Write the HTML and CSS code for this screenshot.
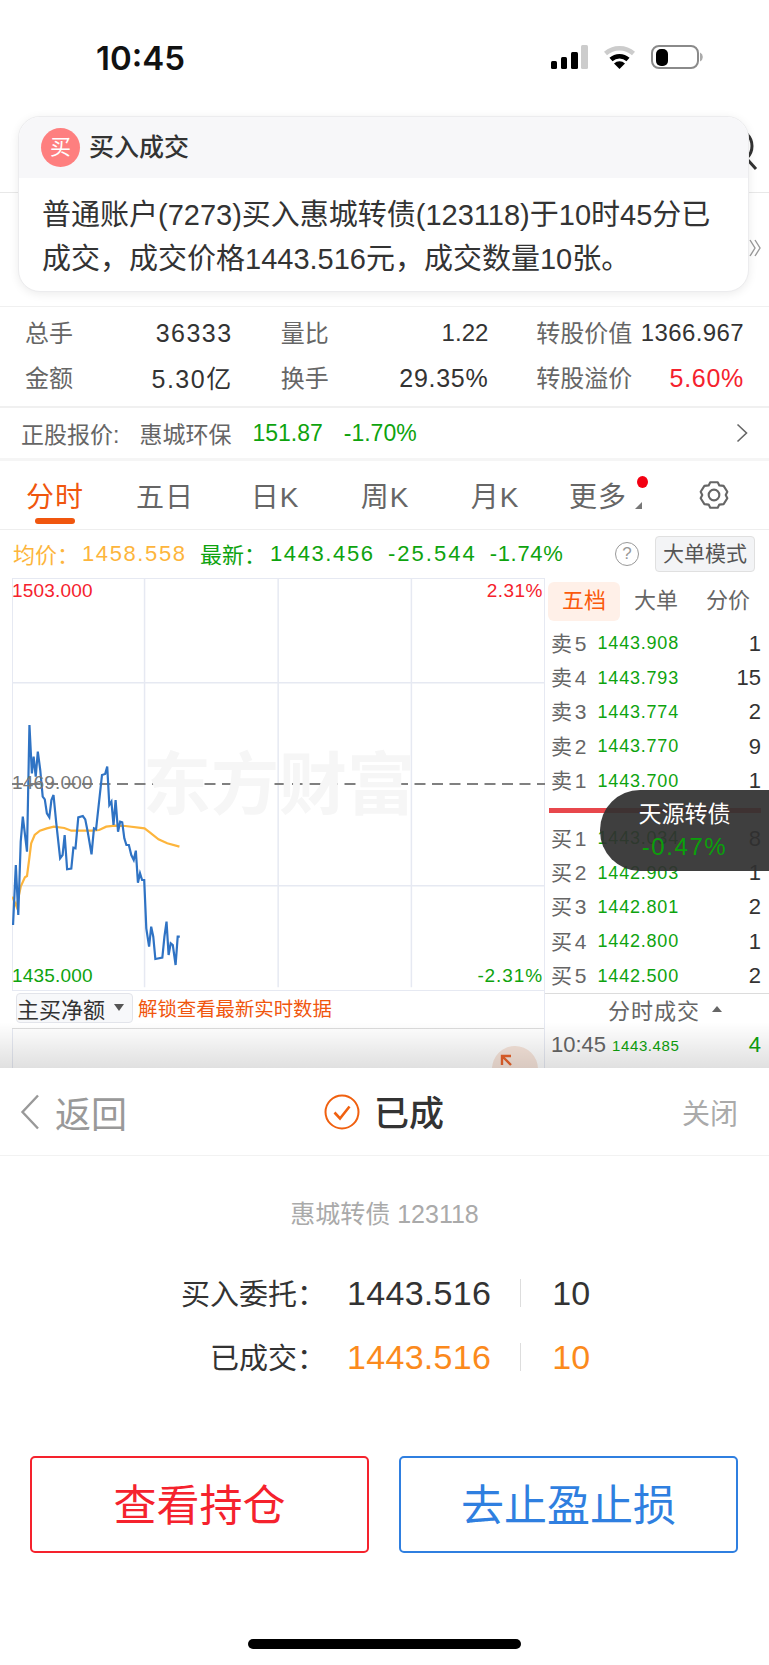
FILE: index.html
```html
<!DOCTYPE html>
<html>
 <head>
  <meta charset="utf-8">
  <title>惠城转债</title>
  <meta name="viewport" content="width=device-width, initial-scale=1.0">
  <link rel="stylesheet" href="styles.css">
 </head>
<body>

<header class="status">
  <span class="time">10:45</span>
  <div class="status-icons">
    <svg width="37" height="24" viewBox="0 0 37 24">
      <rect x="0" y="16" width="6" height="8" rx="1.5" fill="#000"/>
      <rect x="10" y="12" width="6" height="12" rx="1.5" fill="#000"/>
      <rect x="20" y="7" width="7" height="17" rx="1.5" fill="#000"/>
      <rect x="30" y="0" width="7" height="24" rx="1.5" fill="#ccc"/>
    </svg>
    <svg class="wifi" width="33" height="24" viewBox="0 0 33 24">
      <path d="M2.5 8.5a21 21 0 0 1 28 0" fill="none" stroke="#ccc" stroke-width="4.5"/>
      <path d="M8 14.5a12.5 12.5 0 0 1 17 0" fill="none" stroke="#000" stroke-width="4.5"/>
      <path d="M16.5 24l-5.5-5.5a8 8 0 0 1 11 0z" fill="#000"/>
    </svg>
    <svg class="battery" width="52" height="24" viewBox="0 0 52 24">
      <rect x="1" y="1" width="46" height="22" rx="7" fill="none" stroke="#8a8a8a" stroke-width="2"/>
      <rect x="5" y="4" width="12" height="17" rx="5" fill="#000"/>
      <path d="M49 7.5a5 5 0 0 1 0 9z" fill="#aaa"/>
    </svg>
  </div>
</header>

<div class="nav">
  <svg class="nav-search" width="44" height="46" viewBox="0 0 44 46">
    <circle cx="20" cy="20" r="17" fill="none" stroke="#333" stroke-width="3"/>
    <path d="M32 33l9 10" stroke="#333" stroke-width="3"/>
  </svg>
</div>

<div class="quote">
  <svg width="12" height="18" viewBox="0 0 12 18">
    <path d="M1 1l5 8-5 8M6 1l5 8-5 8" fill="none" stroke="#999" stroke-width="1.4"/>
  </svg>
</div>

<!-- notification lying over the page -->
<div class="notice">
  <div class="notice-head">
    <span class="notice-badge">买</span>
    <span class="notice-title">买入成交</span>
  </div>
  <p class="notice-body">普通账户(7273)买入惠城转债(123118)于10时45分已<br>成交，成交价格1443.516元，成交数量10张。</p>
</div>

<section class="stats">
  <div class="stat"><span class="stat-label">总手</span><span class="stat-num sp-wide">36333</span></div>
  <div class="stat"><span class="stat-label">量比</span><span class="stat-num">1.22</span></div>
  <div class="stat"><span class="stat-label">转股价值</span><span class="stat-num sp-thin">1366.967</span></div>
  <div class="stat"><span class="stat-label">金额</span><span class="sp-wide">5.30亿</span></div>
  <div class="stat"><span class="stat-label">换手</span><span class="stat-num sp-mid">29.35%</span></div>
  <div class="stat"><span class="stat-label">转股溢价</span><span class="stat-num red sp-mid">5.60%</span></div>
</section>

<section class="stock">
  <span class="stock-label">正股报价:</span>
  <span class="stock-name">惠城环保</span>
  <span class="green stock-price">151.87</span>
  <span class="green stock-pct">-1.70%</span>
  <svg class="stock-arrow" width="12" height="20" viewBox="0 0 12 20">
    <path d="M1.5 1.5l9 8.5-9 8.5" fill="none" stroke="#666" stroke-width="1.6"/>
  </svg>
</section>

<nav class="tabs">
  <a class="tab tab-on">分时</a>
  <a class="tab">五日</a>
  <a class="tab">日K</a>
  <a class="tab">周K</a>
  <a class="tab">月K</a>
  <a class="tab tab-more">更多<i class="more-dot"></i><i class="more-corner"></i></a>
  <a class="tab">
    <svg class="gear" width="32" height="32" viewBox="0 0 30 30">
      <path d="M11.5 3L18.5 3 20 6 24 6.5 27.5 12 26 15 27.5 18 24 23.5 20 24 18.5 27 11.5 27 10 24 6 23.5 2.5 18 4 15 2.5 12 6 6.5 10 6Z" fill="none" stroke="#666" stroke-width="2" stroke-linejoin="round"/>
      <circle cx="15" cy="15" r="5" fill="none" stroke="#666" stroke-width="2"/>
    </svg>
  </a>
</nav>

<section class="info">
  <span class="amber info-label">均价：</span>
  <span class="amber info-num">1458.558</span>
  <span class="green info-label info-new">最新：</span>
  <span class="green info-num">1443.456</span>
  <span class="green info-change">-25.544</span>
  <span class="green info-pct">-1.74%</span>
  <span class="info-help">?</span>
  <span class="info-btn">大单模式</span>
</section>

<section class="market">
  <div class="chart-col">
    <div class="chart">
      <svg class="chart-lines" viewBox="35 24 1528 1236" preserveAspectRatio="none">
        <g stroke="#e6e9f2" stroke-width="1.5" fill="none">
          <path d="M415 24V1252M798 24V1252M1180 24V1252" vector-effect="non-scaling-stroke"/>
          <path d="M35 338H1563M35 947H1563" vector-effect="non-scaling-stroke"/>
        </g>
        <path d="M35 642H1563" stroke="#808080" stroke-width="1.8" stroke-dasharray="11 6.5" vector-effect="non-scaling-stroke"/>
        <path d="M36 980L48 1010 60 950 72 922 78 918 84 870 90 820 100 795 115 782 135 775 155 770 185 774 205 782 240 782 265 782 285 780 305 770 330 767 360 768 415 775 430 787 455 808 480 820 515 830" fill="none" stroke="#fdb53c" stroke-width="2.2" vector-effect="non-scaling-stroke"/>
        <path d="M38 1065L46 885 53 1035 60 815 66 740 78 845 85 465 92 610 97 560 103 620 109 545 116 600 123 680 129 688 135 730 142 742 148 690 154 675 162 760 173 865 180 855 186 795 193 898 205 896 211 833 217 835 225 742 238 738 245 748 252 785 263 853 270 775 276 778 293 615 302 612 308 590 314 705 320 695 326 765 332 690 339 785 345 755 351 757 357 805 363 825 370 825 377 855 384 870 390 842 396 938 402 910 408 930 414 930 420 1075 428 1130 434 1070 440 1100 446 1167 466 1163 472 1100 478 1055 484 1155 490 1120 496 1125 504 1185 510 1100 516 1100" fill="none" stroke="#2f73c4" stroke-width="2.2" vector-effect="non-scaling-stroke"/>
      </svg>
      <span class="mark">东方财富</span>
      <span class="axis axis-top-l red">1503.000</span>
      <span class="axis axis-mid-l">1469.000</span>
      <span class="axis axis-low-l green">1435.000</span>
      <span class="axis axis-top-r red">2.31%</span>
      <span class="axis axis-low-r green">-2.31%</span>
    </div>
    <div class="sub-row">
      <span class="sub-select">主买净额<i class="caret"></i></span>
      <span class="sub-link">解锁查看最新实时数据</span>
    </div>
    <div class="sub-chart"></div>
  </div>

  <div class="book">
    <div class="book-tabs">
      <span class="book-tab book-tab-on">五档</span>
      <span class="book-tab">大单</span>
      <span class="book-tab">分价</span>
    </div>
    <div class="book-row"><span class="book-side">卖 5</span><span class="book-price">1443.908</span><span class="book-vol">1</span></div>
    <div class="book-row"><span class="book-side">卖 4</span><span class="book-price">1443.793</span><span class="book-vol">15</span></div>
    <div class="book-row"><span class="book-side">卖 3</span><span class="book-price">1443.774</span><span class="book-vol">2</span></div>
    <div class="book-row"><span class="book-side">卖 2</span><span class="book-price">1443.770</span><span class="book-vol">9</span></div>
    <div class="book-row"><span class="book-side">卖 1</span><span class="book-price">1443.700</span><span class="book-vol">1</span></div>
    <div class="book-split"></div>
    <div class="book-row"><span class="book-side">买 1</span><span class="book-price">1443.034</span><span class="book-vol">8</span></div>
    <div class="book-row"><span class="book-side">买 2</span><span class="book-price">1442.903</span><span class="book-vol">1</span></div>
    <div class="book-row"><span class="book-side">买 3</span><span class="book-price">1442.801</span><span class="book-vol">2</span></div>
    <div class="book-row"><span class="book-side">买 4</span><span class="book-price">1442.800</span><span class="book-vol">1</span></div>
    <div class="book-row"><span class="book-side">买 5</span><span class="book-price">1442.500</span><span class="book-vol">2</span></div>
    <div class="deal-head">分时成交<i class="deal-caret"></i></div>
    <div class="deal-row"><span class="deal-time">10:45</span><span class="deal-price">1443.485</span><span class="deal-vol">4</span></div>
  </div>

  <div class="toast">
    <span class="toast-name">天源转债</span>
    <span class="toast-pct">-0.47%</span>
  </div>

  <div class="expand">
    <svg width="30" height="30" viewBox="0 0 30 30">
      <path d="M2 11V2H11M2 2L11 11" fill="none" stroke="#e8622a" stroke-width="2.4"/>
      <path d="M28 19V28H19M28 28L19 19" fill="none" stroke="#e8622a" stroke-width="2.4"/>
    </svg>
  </div>
  <div class="market-shade"></div>
</section>

<section class="sheet">
  <div class="sheet-head">
    <div class="sheet-back">
      <svg width="20" height="36" viewBox="0 0 20 36">
        <path d="M18 1.5L2.5 18 18 34.5" fill="none" stroke="#999" stroke-width="2.4"/>
      </svg>
      <span>返回</span>
    </div>
    <div class="sheet-title">
      <svg width="36" height="36" viewBox="0 0 36 36">
        <circle cx="18" cy="18" r="16.5" fill="none" stroke="#f0600f" stroke-width="2"/>
        <path d="M10.5 18.5l5.5 6 9.5-12" fill="none" stroke="#f0600f" stroke-width="2.6"/>
      </svg>
      <span>已成</span>
    </div>
    <div class="sheet-close">关闭</div>
  </div>

  <div class="sheet-name">惠城转债 123118</div>

  <div class="fill-row">
    <span class="fill-label">买入委托：</span>
    <span class="fill-price">1443.516</span>
    <i class="fill-bar"></i>
    <span class="fill-qty">10</span>
  </div>
  <div class="fill-row fill-done">
    <span class="fill-label">已成交：</span>
    <span class="fill-price">1443.516</span>
    <i class="fill-bar"></i>
    <span class="fill-qty">10</span>
  </div>

  <div class="actions">
    <a class="action action-red">查看持仓</a>
    <a class="action action-blue">去止盈止损</a>
  </div>

  <div class="home-bar"></div>
</section>

</body>
</html>
```

FILE: styles.css
```css
* {
  box-sizing: border-box;
}

html, body {
  margin: 0;
  padding: 0;
}

body {
  position: relative;
  width: 769px;
  height: 1665px;
  overflow: hidden;
  background: #fff;
  color: #333;
  font-family: "Liberation Sans", "Noto Sans CJK SC", sans-serif;
}

i {
  font-style: normal;
}

.red { color: #f5222d; }
.green { color: #0ea30e; }
.amber { color: #fdb53c; }

/* status bar */
.status {
  display: flex;
  justify-content: space-between;
  height: 100px;
  padding: 41px 66px 0 96px;
}

.time {
  font-family: Inter, sans-serif;
  font-size: 33px;
  font-weight: 600;
  line-height: 34px;
  color: #111;
}

.status-icons {
  display: flex;
  align-items: flex-start;
  padding-top: 4px;
}

.wifi { margin-left: 15px; }
.battery { margin-left: 15px; }

/* page parts hidden below the notice */
.nav {
  display: flex;
  justify-content: flex-end;
  height: 93px;
  padding: 26px 10px 0 0;
  border-bottom: 1px solid #e8e8e8;
}

.quote {
  display: flex;
  justify-content: flex-end;
  align-items: flex-end;
  height: 114px;
  padding: 0 8px 49px 0;
  border-bottom: 1px solid #f0f0f0;
}

.notice {
  position: absolute;
  top: 116px;
  left: 18px;
  width: 731px;
  height: 176px;
  background: #fff;
  border: 1px solid #ececee;
  border-radius: 22px;
  box-shadow: 0 2px 10px rgba(0, 0, 0, .08);
  overflow: hidden;
}

.notice-head {
  display: flex;
  align-items: center;
  height: 61px;
  padding-left: 22px;
  background: #f7f7f9;
}

.notice-badge {
  width: 39px;
  height: 39px;
  border-radius: 50%;
  background: #fe7f7f;
  color: #fff;
  font-size: 21px;
  line-height: 37px;
  text-align: center;
}

.notice-title {
  margin-left: 9px;
  padding-bottom: 5px;
  font-size: 25px;
  font-weight: 500;
  color: #333;
}

.notice-body {
  margin: 15px 0 0 23px;
  font-size: 29px;
  line-height: 44px;
  color: #333;
  white-space: nowrap;
}

/* stats */
.stats {
  display: grid;
  grid-template-columns: repeat(3, 1fr);
  grid-auto-rows: 45px;
  column-gap: 48px;
  height: 101px;
  padding: 2px 25px 0;
  border-bottom: 2px solid #f0f0f0;
  font-size: 24px;
}

.stat {
  display: flex;
  justify-content: space-between;
  align-items: center;
}

.stat-label {
  color: #666;
}

.stat-num { padding-top: 3px; }
.sp-wide { font-size: 25px; letter-spacing: 1.5px; }
.sp-mid { font-size: 25px; letter-spacing: .7px; }
.sp-thin { letter-spacing: .4px; }

/* underlying stock */
.stock {
  display: flex;
  align-items: center;
  height: 53px;
  padding: 0 21px;
  border-bottom: 3px solid #f5f5f5;
  font-size: 23px;
}

.stock-label { color: #666; }
.stock-name { margin-left: 20px; color: #666; }
.stock-price { margin-left: 21px; }
.stock-pct { margin-left: 21px; }
.stock-arrow { margin-left: auto; }

/* period tabs */
.tabs {
  display: grid;
  grid-template-columns: repeat(7, 110px);
  height: 69px;
  border-bottom: 1px solid #eeeeee;
}

.tab {
  position: relative;
  display: flex;
  justify-content: center;
  align-items: center;
  font-size: 28px;
  letter-spacing: 1px;
  color: #666;
}

.tab-on {
  color: #f0560e;
}

.tab-on::after {
  content: "";
  position: absolute;
  left: 35px;
  bottom: 5px;
  width: 40px;
  height: 6px;
  border-radius: 3px;
  background: #f0560e;
}

.tab-more {
  padding-right: 14px;
}

.more-dot {
  position: absolute;
  top: 15px;
  left: 87px;
  width: 11px;
  height: 12px;
  border-radius: 50%;
  background: #f30012;
}

.more-corner {
  position: absolute;
  top: 41px;
  left: 85px;
  width: 0;
  height: 0;
  border-left: 7px solid transparent;
  border-bottom: 7px solid #777;
}

.gear {
  margin-left: -3px;
}

/* price line above the chart */
.info {
  display: flex;
  align-items: center;
  height: 48px;
  padding: 0 14px 0 13px;
  font-size: 22px;
}

.info-label { width: 69px; padding-bottom: 3px; white-space: nowrap; }
.info-num { width: 103px; letter-spacing: 1.6px; white-space: nowrap; }
.info-new { margin-left: 15px; width: 70px; }
.info-change { margin-left: 15px; letter-spacing: 2px; }
.info-pct { margin-left: 13px; letter-spacing: .7px; }

.info-help {
  width: 24px;
  height: 24px;
  margin-left: auto;
  border: 1.5px solid #999;
  border-radius: 50%;
  color: #999;
  font-size: 17px;
  line-height: 21px;
  text-align: center;
}

.info-btn {
  width: 100px;
  height: 36px;
  margin-left: 16px;
  border: 1px solid #e0e0e0;
  border-radius: 4px;
  background: #f3f4f6;
  color: #555;
  font-size: 21px;
  line-height: 33px;
  text-align: center;
}

/* chart + order book */
.market {
  position: relative;
  display: flex;
  height: 490px;
  overflow: hidden;
}

.chart-col {
  flex: none;
  width: 544px;
  padding-left: 12px;
}

.chart {
  position: relative;
  width: 533px;
  height: 413px;
  border: 1px solid #e6e9f2;
  border-right: 0;
}

.chart-lines {
  position: absolute;
  top: -1px;
  left: -1px;
  width: 533px;
  height: 412px;
}

.mark {
  position: absolute;
  top: 170px;
  left: 130px;
  font-size: 68px;
  font-weight: 700;
  line-height: 72px;
  color: #f6f6f6;
  white-space: nowrap;
}

.axis {
  position: absolute;
  font-size: 19px;
  line-height: 22px;
  letter-spacing: .2px;
}

.axis-top-l { top: 1px; left: -1px; }
.axis-mid-l { top: 193px; left: -1px; color: #777; }
.axis-low-l { top: 386px; left: -1px; }
.axis-top-r { top: 1px; right: 2px; letter-spacing: .5px; }
.axis-low-r { top: 386px; right: 2px; letter-spacing: .9px; }

.sub-row {
  display: flex;
  align-items: center;
  height: 38px;
  padding: 0 0 4px 4px;
  border-bottom: 1px solid #dcdcdc;
}

.sub-select {
  display: flex;
  align-items: center;
  width: 117px;
  height: 30px;
  border: 1px solid #e2e4ea;
  border-radius: 4px;
  background: #f7f8fa;
  font-size: 22px;
  color: #333;
}

.caret {
  margin-left: 9px;
  border-top: 7px solid #555;
  border-left: 5px solid transparent;
  border-right: 5px solid transparent;
}

.sub-link {
  margin-left: 5px;
  font-size: 19.4px;
  color: #f0560e;
}

.sub-chart {
  height: 40px;
  border-left: 1px solid #e6e9f2;
}

.book {
  flex: 1;
  border-left: 1px solid #e6e9f2;
}

.book-tabs {
  display: grid;
  grid-template-columns: 72px 72px 72px;
  height: 48.5px;
  padding: 4px 0 0 3px;
}

.book-tab {
  height: 39px;
  border-radius: 6px;
  color: #666;
  font-size: 22px;
  line-height: 37px;
  text-align: center;
}

.book-tab-on {
  background: #fff0e8;
  color: #fa5a0c;
}

.book-row {
  display: grid;
  grid-template-columns: 44px 84px 1fr;
  align-items: center;
  height: 34.4px;
  padding: 0 8px 0 6px;
}

.book-side {
  padding-bottom: 4px;
  color: #666;
  font-size: 21px;
  word-spacing: -3px;
  white-space: nowrap;
}

.book-price {
  color: #0ea30e;
  font-size: 18px;
  letter-spacing: .8px;
  text-align: right;
}

.book-vol {
  color: #333;
  font-size: 22px;
  text-align: right;
}

.book-split {
  height: 5px;
  margin: 10px 8px 8px 4px;
  background: #e8474c;
}

.deal-head {
  display: flex;
  justify-content: center;
  align-items: center;
  height: 35px;
  padding: 0 0 4px 16px;
  border-top: 1px solid #dcdcdc;
  color: #666;
  font-size: 22px;
  letter-spacing: 1px;
}

.deal-caret {
  margin-left: 12px;
  border-bottom: 6px solid #666;
  border-left: 5px solid transparent;
  border-right: 5px solid transparent;
}

.deal-row {
  display: flex;
  align-items: center;
  height: 34px;
  padding: 0 8px 0 6px;
}

.deal-time {
  color: #666;
  font-size: 22px;
}

.deal-price {
  margin-left: 6px;
  color: #0ea30e;
  font-size: 15px;
  letter-spacing: .6px;
}

.deal-vol {
  margin-left: auto;
  color: #0ea30e;
  font-size: 22px;
}

/* "recently viewed" pill, over the book */
.toast {
  position: absolute;
  top: 212px;
  right: 0;
  display: flex;
  flex-direction: column;
  align-items: center;
  width: 169px;
  height: 81px;
  padding-top: 8px;
  border-radius: 40px 0 0 40px;
  background: rgba(48, 48, 48, .93);
}

.toast-name {
  color: #fff;
  font-size: 23px;
  line-height: 33px;
}

.toast-pct {
  color: #0aa00a;
  font-size: 24px;
  line-height: 31px;
  letter-spacing: 1.6px;
}

.expand {
  position: absolute;
  top: 468px;
  left: 492px;
  width: 46px;
  height: 46px;
  padding: 8px;
  border-radius: 50%;
  background: #f7e5db;
}

.market-shade {
  position: absolute;
  left: 0;
  right: 0;
  bottom: 0;
  height: 46px;
  background: linear-gradient(rgba(0, 0, 0, 0), rgba(0, 0, 0, .12));
}

/* order result sheet */
.sheet {
  height: 597px;
  background: #fff;
}

.sheet-head {
  display: grid;
  grid-template-columns: 1fr auto 1fr;
  align-items: center;
  height: 88px;
  padding: 0 31px 0 20px;
  border-bottom: 1px solid #f2f2f2;
}

.sheet-back {
  display: flex;
  align-items: center;
  color: #999;
  font-size: 36px;
}

.sheet-back span {
  margin-left: 15px;
}

.sheet-title {
  display: flex;
  align-items: center;
  margin-left: 10px;
  color: #333;
  font-size: 35px;
  font-weight: 500;
}

.sheet-title span {
  margin-left: 14px;
  padding-bottom: 2px;
}

.sheet-close {
  color: #aaa;
  font-size: 28px;
  text-align: right;
}

.sheet-name {
  margin-top: 42px;
  color: #aaa;
  font-size: 25px;
  line-height: 32px;
  text-align: center;
}

.fill-row {
  display: flex;
  align-items: center;
  height: 64px;
  font-size: 34px;
}

.sheet-name + .fill-row {
  margin-top: 31px;
}

.fill-label {
  width: 326px;
  padding-bottom: 3px;
  color: #333;
  font-size: 29px;
  text-align: right;
}

.fill-price {
  margin-left: 21px;
  letter-spacing: .3px;
}

.fill-bar {
  width: 1px;
  height: 28px;
  margin: 0 31px 0 29px;
  background: #ddd;
}

.fill-done .fill-price,
.fill-done .fill-qty {
  color: #fb8a1c;
}

.actions {
  display: flex;
  gap: 30px;
  margin-top: 67px;
  padding: 0 31px 0 30px;
}

.action {
  flex: 1;
  height: 97px;
  border: 2px solid;
  border-radius: 5px;
  font-size: 43px;
  line-height: 96px;
  text-align: center;
}

.action-red {
  border-color: #f5222d;
  color: #f5222d;
}

.action-blue {
  border-color: #2f7fe0;
  color: #2f7fe0;
}

.home-bar {
  width: 273px;
  height: 10px;
  margin: 86px auto 0;
  border-radius: 5px;
  background: #000;
}
```
